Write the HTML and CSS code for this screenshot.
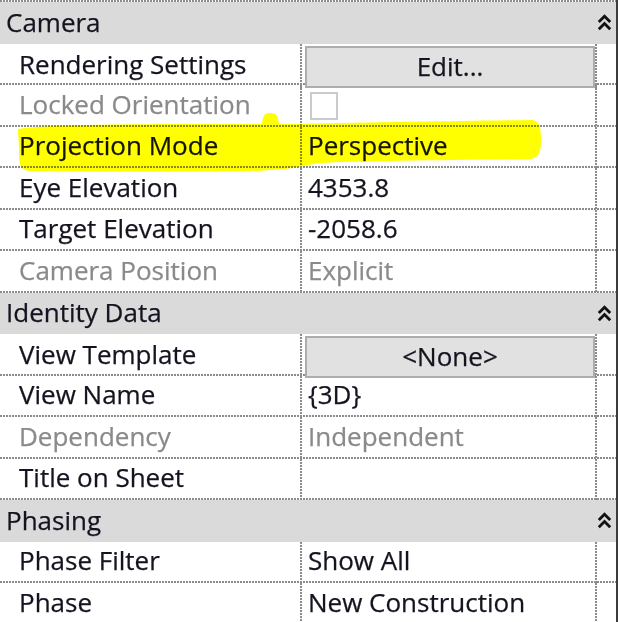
FILE: index.html
```html
<!DOCTYPE html>
<html lang="en">
<head>
<meta charset="utf-8">
<title>Properties</title>
<link rel="stylesheet" href="styles.css">
</head>
<body>
<div class="panel">
  <div class="group">
    <span class="group-title">Camera</span>
    <svg class="chev" width="15" height="17" viewBox="0 0 15 17"><path d="M1.8 8 L7.5 2.3 L13.2 8 M1.8 15.2 L7.5 9.5 L13.2 15.2" fill="none" stroke="#111" stroke-width="2.8"/></svg>
  </div>
  <div class="row"><div class="label">Rendering Settings</div><div class="value"><div class="btn">Edit...</div></div><div class="pad"></div></div>
  <div class="row"><div class="label dim">Locked Orientation</div><div class="value"><span class="check"></span></div><div class="pad"></div></div>
  <div class="row"><div class="label">Projection Mode</div><div class="value">Perspective</div><div class="pad"></div></div>
  <div class="row"><div class="label">Eye Elevation</div><div class="value">4353.8</div><div class="pad"></div></div>
  <div class="row"><div class="label">Target Elevation</div><div class="value">-2058.6</div><div class="pad"></div></div>
  <div class="row"><div class="label dim">Camera Position</div><div class="value dim">Explicit</div><div class="pad"></div></div>
  <div class="group">
    <span class="group-title">Identity Data</span>
    <svg class="chev" width="15" height="17" viewBox="0 0 15 17"><path d="M1.8 8 L7.5 2.3 L13.2 8 M1.8 15.2 L7.5 9.5 L13.2 15.2" fill="none" stroke="#111" stroke-width="2.8"/></svg>
  </div>
  <div class="row"><div class="label">View Template</div><div class="value"><div class="btn">&lt;None&gt;</div></div><div class="pad"></div></div>
  <div class="row"><div class="label">View Name</div><div class="value">{3D}</div><div class="pad"></div></div>
  <div class="row"><div class="label dim">Dependency</div><div class="value dim">Independent</div><div class="pad"></div></div>
  <div class="row"><div class="label">Title on Sheet</div><div class="value"></div><div class="pad"></div></div>
  <div class="group">
    <span class="group-title">Phasing</span>
    <svg class="chev" width="15" height="17" viewBox="0 0 15 17"><path d="M1.8 8 L7.5 2.3 L13.2 8 M1.8 15.2 L7.5 9.5 L13.2 15.2" fill="none" stroke="#111" stroke-width="2.8"/></svg>
  </div>
  <div class="row"><div class="label">Phase Filter</div><div class="value">Show All</div><div class="pad"></div></div>
  <div class="row"><div class="label">Phase</div><div class="value">New Construction</div><div class="pad"></div></div>

  <svg class="marker" width="618" height="200" viewBox="0 0 618 200">
    <path d="M18 129 C40 125 120 124 200 124 L262 124 C263 116 264 113 270 113 C277 113 278 116 279 124 L300 124 C380 122 470 121 532 120 C540 121 541 128 541 140 C541 152 539 158 530 159 C450 160 360 161 320 163 C300 166 290 170 250 171 C180 172 90 172 30 171 C20 170 19 165 19 150 C19 140 18 134 18 129 Z" fill="#ffff00"/>
  </svg>
</div>
</body>
</html>
```

FILE: styles.css
```css
html, body {
  margin: 0;
  padding: 0;
  background: #ffffff;
}

body {
  font-family: "Open Sans", "Noto Sans", sans-serif;
  font-size: 26px;
  color: #141420;
  -webkit-text-stroke: 0.25px currentColor;
}

.panel {
  position: relative;
  width: 618px;
  box-sizing: border-box;
  border-right: 2px solid #3c3c3c;
  padding-top: 2px;
  background-image: repeating-linear-gradient(90deg, #8c8c8c 0 2px, transparent 2px 3px);
  background-size: 100% 2px;
  background-repeat: no-repeat;
  background-position: top left;
}

.group {
  height: 41.5px;
  background: #dadada;
  display: flex;
  align-items: center;
  justify-content: space-between;
  padding-left: 6px;
  padding-right: 4px;
  padding-bottom: 2px;
  box-sizing: border-box;
}

.group-title {
  line-height: 1;
}

.chev {
  display: block;
  margin-top: 2px;
}

.row {
  height: 41.5px;
  display: grid;
  grid-template-columns: 302px 295px 1fr;
  background-image: repeating-linear-gradient(90deg, #8c8c8c 0 2px, transparent 2px 3px);
  background-size: 100% 2px;
  background-repeat: no-repeat;
  background-position: bottom left;
}

.label,
.value {
  display: flex;
  align-items: center;
  white-space: nowrap;
  background-image: repeating-linear-gradient(180deg, #8c8c8c 0 2px, transparent 2px 3px);
  background-size: 2px 100%;
  background-repeat: no-repeat;
  background-position: top right;
  padding-bottom: 4px;
}

.label {
  padding-left: 19px;
}

.value {
  padding-left: 6px;
  padding-right: 2px;
}

.dim {
  color: #8a8a8a;
}

.btn {
  align-self: stretch;
  flex: 1;
  margin: 2px 0 -4px -3px;
  padding-bottom: 2px;
  background: #e1e1e1;
  border: 2px solid #adadad;
  display: flex;
  align-items: center;
  justify-content: center;
}

.check {
  display: block;
  width: 24px;
  height: 24px;
  margin-left: 2px;
  margin-top: 4px;
  border: 2px solid #cbcbcb;
  background: #fff;
}

.marker {
  position: absolute;
  left: 0;
  top: 0;
  mix-blend-mode: multiply;
  pointer-events: none;
}
```
